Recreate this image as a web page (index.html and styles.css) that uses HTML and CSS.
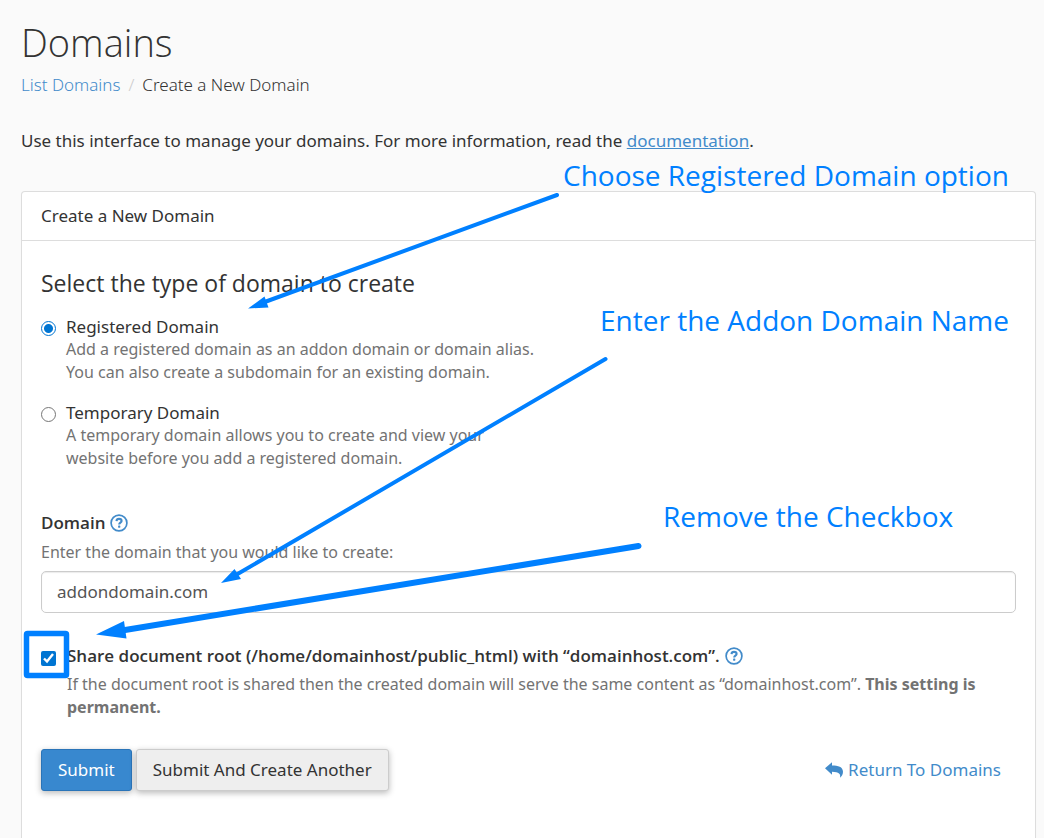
FILE: index.html
```html
<!DOCTYPE html>
<html lang="en">
<head>
<meta charset="utf-8">
<title>Domains</title>
<link rel="stylesheet" href="styles.css">
</head>
<body>
<svg class="sprite" aria-hidden="true">
  <symbol id="help" viewBox="0 0 18 18">
    <circle cx="9" cy="9" r="7.9" fill="none" stroke="currentColor" stroke-width="1.7"/>
    <path d="M6.500 7.100C6.600 5.600 7.600 4.900 9 4.900c1.500 0 2.600.8 2.600 2.100C11.600 8.600 9.200 8.700 9.200 10.400" fill="none" stroke="currentColor" stroke-width="2.100"/>
    <rect x="8.100" y="11.500" width="2.200" height="2.200" rx=".4" fill="currentColor"/>
  </symbol>
</svg>
<main class="page">
  <h1 class="title">Domains</h1>
  <nav class="crumbs" aria-label="Breadcrumb">
    <a class="link" href="#">List Domains</a>
    <span class="slash">/</span>
    <span>Create a New Domain</span>
  </nav>
  <p class="intro">Use this interface to manage your domains. For more information, read the <a class="link underlined" href="#">documentation</a>.</p>

  <section class="panel">
    <header class="panel-head">Create a New Domain</header>
    <form class="panel-body">
      <h2 class="subtitle">Select the type of domain to create</h2>
      <div class="option">
        <input class="radio" type="radio" name="type" id="registered" checked>
        <div>
          <label class="option-label" for="registered">Registered Domain</label>
          <p class="help">Add a registered domain as an addon domain or domain alias.<br>You can also create a subdomain for an existing domain.</p>
        </div>
      </div>
      <div class="option">
        <input class="radio" type="radio" name="type" id="temporary">
        <div>
          <label class="option-label" for="temporary">Temporary Domain</label>
          <p class="help">A temporary domain allows you to create and view your<br>website before you add a registered domain.</p>
        </div>
      </div>

      <div class="field">
        <div class="field-head">
          <label class="strong-label" for="domain">Domain</label>
          <button class="help-button" type="button" aria-label="Domain help"><svg class="help-icon"><use href="#help"/></svg></button>
        </div>
        <p class="help">Enter the domain that you would like to create:</p>
        <input class="text-box" type="text" id="domain" value="addondomain.com">
      </div>

      <div class="option share">
        <input class="check" type="checkbox" id="share" checked>
        <div>
          <div class="field-head">
            <label class="strong-label" for="share">Share document root (/home/domainhost/public_html) with “domainhost.com”.</label>
            <button class="help-button" type="button" aria-label="Document root help"><svg class="help-icon"><use href="#help"/></svg></button>
          </div>
          <p class="help">If the document root is shared then the created domain will serve the same content as “domainhost.com”. <strong>This setting is permanent.</strong></p>
        </div>
      </div>

      <div class="actions">
        <button class="button primary" type="submit">Submit</button>
        <button class="button" type="button">Submit And Create Another</button>
        <a class="link return" href="#">
          <svg class="return-icon" viewBox="0 0 18 16" aria-hidden="true"><path d="M0 6.300 7 .2V3.400C13 3.400 18 4.600 18 9.800c0 2.500-1.200 4.700-3 6 .9-3.800-.8-6-8-6.100v3z" fill="currentColor"/></svg>
          <span>Return To Domains</span>
        </a>
      </div>
    </form>
  </section>

  <svg class="arrows" width="1044" height="838" aria-hidden="true">
    <g fill="none" stroke="#0080ff" stroke-linecap="round">
      <path d="M557 195 262 303" stroke-width="4"/>
      <path d="M605.500 359 235 575.500" stroke-width="4"/>
      <path d="M638.500 546 122 630.500" stroke-width="6"/>
    </g>
    <path d="M248 308.500 264.500 296.500 268.500 307.500zM221 583 234.500 569 241 579zM96 634.500 124 621 126.500 638.500z" fill="#0080ff"/>
    <rect x="26.500" y="633.500" width="40" height="42" rx="1" fill="none" stroke="#0080ff" stroke-width="5.500"/>
  </svg>
  <p class="note note-type">Choose Registered Domain option</p>
  <p class="note note-name">Enter the Addon Domain Name</p>
  <p class="note note-check">Remove the Checkbox</p>
</main>
</body>
</html>
```
FILE: styles.css
```css
* { box-sizing: border-box; }
body {
  margin: 0;
  background: #fafafa;
  color: #333;
  font: 17px/24px "Noto Sans", sans-serif;
}
h1, h2, p { margin: 0; font-weight: 400; }
button, input { font: inherit; margin: 0; }
.sprite { position: absolute; width: 0; height: 0; }
.page {
  position: relative;
  display: flex;
  flex-direction: column;
  min-height: 100vh;
  padding: 20px 8px 0 21px;
}
.title { font: 300 38px/44px "Open Sans", sans-serif; }
.crumbs { display: flex; gap: 8px; margin-top: 9px; font-weight: 300; }
.slash { color: #ccc; }
.link { color: #428bca; text-decoration: none; }
.underlined { text-decoration: underline; }
.intro { margin: 32px 0 38px; }
.panel {
  flex: 1;
  background: #fff;
  border: 1px solid #ddd;
  border-bottom: 0;
  border-radius: 4px 4px 0 0;
  box-shadow: 0 1px 1px rgba(0, 0, 0, .05);
}
.panel-head { padding: 12px 19px; border-bottom: 1px solid #ddd; }
.panel-body { padding: 28px 19px; }
.subtitle { font: 23px/28px "Open Sans", sans-serif; margin-bottom: 18px; }
.option { display: flex; gap: 10px; margin-bottom: 17px; }
.option-label { display: block; line-height: 23px; }
.radio, .check { flex: none; width: 15px; height: 15px; }
.radio {
  appearance: none;
  margin-top: 6px;
  border: 1px solid #767676;
  border-radius: 50%;
}
.radio:checked {
  border-color: #0075d2;
  background: radial-gradient(circle, #0075d2 4px, #fff 5px);
}
.check { margin-top: 7px; accent-color: #0075d2; }
.help { color: #737373; font-size: 16px; line-height: 23px; }
.field { margin-top: 41px; }
.field-head { display: flex; align-items: center; gap: 5px; margin-bottom: 6px; }
.strong-label { font: 600 17px/24px "Open Sans", sans-serif; }
.help-button {
  display: flex;
  padding: 0;
  border: 0;
  background: none;
  color: #428bca;
}
.help-icon { width: 18px; height: 18px; }
.text-box {
  display: block;
  width: 100%;
  height: 42px;
  margin-top: 7px;
  padding: 0 15px 2px;
  border: 1px solid #ccc;
  border-radius: 5px;
  box-shadow: inset 0 1px 1px rgba(0, 0, 0, .08);
  color: #555;
  background: #fff;
}
.share { gap: 11px; margin: 31px 0 30px; }
.share .field-head { margin-bottom: 5px; }
.actions { display: flex; align-items: center; gap: 4px; }
.button {
  height: 42px;
  padding: 0 16px;
  border: 1px solid #ccc;
  border-radius: 3px;
  background: #eee;
  color: #333;
  box-shadow: 0 2px 6px rgba(0, 0, 0, .28);
}
.primary { background: #3888cf; border-color: #2a74b8; color: #fff; }
.return { display: flex; align-items: center; gap: 5px; margin: 0 15px 0 auto; }
.return-icon { width: 18px; height: 16px; }
.arrows { position: absolute; left: 0; top: 0; pointer-events: none; }
.note {
  position: absolute;
  color: #0080ff;
  font: 28px/36px "Open Sans", sans-serif;
  white-space: nowrap;
}
.note-type { left: 563px; top: 157px; }
.note-name { left: 600px; top: 302px; }
.note-check { left: 663px; top: 498px; }
```
